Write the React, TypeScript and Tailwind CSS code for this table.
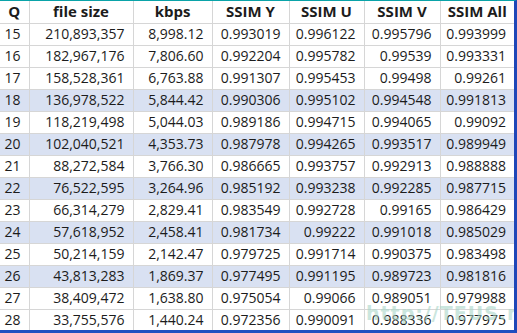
import React from "react"

const rows: string[][] = [
  ["15", "210,893,357", "8,998.12", "0.993019", "0.996122", "0.995796", "0.993999"],
  ["16", "182,967,176", "7,806.60", "0.992204", "0.995782", "0.99539", "0.993331"],
  ["17", "158,528,361", "6,763.88", "0.991307", "0.995453", "0.99498", "0.99261"],
  ["18", "136,978,522", "5,844.42", "0.990306", "0.995102", "0.994548", "0.991813"],
  ["19", "118,219,498", "5,044.03", "0.989186", "0.994715", "0.994065", "0.99092"],
  ["20", "102,040,521", "4,353.73", "0.987978", "0.994265", "0.993517", "0.989949"],
  ["21", "88,272,584", "3,766.30", "0.986665", "0.993757", "0.992913", "0.988888"],
  ["22", "76,522,595", "3,264.96", "0.985192", "0.993238", "0.992285", "0.987715"],
  ["23", "66,314,279", "2,829.41", "0.983549", "0.992728", "0.99165", "0.986429"],
  ["24", "57,618,952", "2,458.41", "0.981734", "0.99222", "0.991018", "0.985029"],
  ["25", "50,214,159", "2,142.47", "0.979725", "0.991714", "0.990375", "0.983498"],
  ["26", "43,813,283", "1,869.37", "0.977495", "0.991195", "0.989723", "0.981816"],
  ["27", "38,409,472", "1,638.80", "0.975054", "0.99066", "0.989051", "0.979988"],
  ["28", "33,755,576", "1,440.24", "0.972356", "0.990091", "0.988336", "0.977975"],
]

const headers = ["Q", "file size", "kbps", "SSIM Y", "SSIM U", "SSIM V", "SSIM All"]
const widths = ["w-[29px]", "w-[104px]", "w-[79px]", "w-[77px]", "w-[75px]", "w-[76px]", "w-[74px]"]
const shaded = ["18", "20", "22", "24", "26"]

export default function App() {
  return (
    <div className="relative w-[517px] h-[333px] bg-white border-t border-t-[#0aa3a8] border-r-[3px] border-r-[#1f47b8] border-b-[3px] border-b-[#1f4fc0] overflow-hidden font-['Open_Sans',sans-serif] text-[14px] text-[#1c1c1c]">
      <table className="border-collapse table-fixed w-[514px]">
        <colgroup>
          {widths.map((w, i) => (
            <col key={i} className={w} />
          ))}
        </colgroup>
        <thead>
          <tr className="h-[22px]">
            {headers.map((h, i) => (
              <th
                key={h}
                className={`p-0 font-bold text-[15px] text-center leading-none border-b border-[#d6d6d6] ${i > 0 ? "border-l" : ""}`}
              >
                {h}
              </th>
            ))}
          </tr>
        </thead>
        <tbody>
          {rows.map((r) => (
            <tr key={r[0]} className={`h-[22px] ${shaded.includes(r[0]) ? "bg-[#d9e1f2]" : "bg-white"}`}>
              {r.map((c, i) => (
                <td
                  key={i}
                  className={`p-0 pr-[8px] text-right leading-none border-b border-[#d6d6d6] ${i > 0 ? "border-l" : ""}`}
                >
                  {c}
                </td>
              ))}
            </tr>
          ))}
        </tbody>
      </table>
      {/* watermark */}
      <div className="absolute left-[366px] top-[303px] leading-none text-[19px] font-bold tracking-[1px] text-[#a9d6c8]/60 font-['DejaVu_Sans',sans-serif] pointer-events-none">
        http://TEUS.me
      </div>
    </div>
  )
}
